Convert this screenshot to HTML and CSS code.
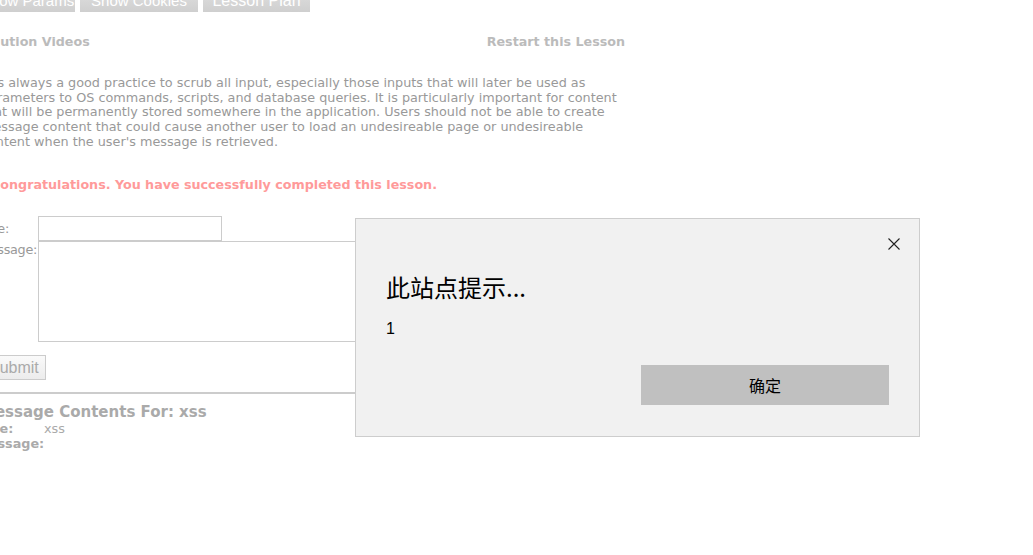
FILE: index.html
```html
<!DOCTYPE html>
<html>
<head>
<meta charset="utf-8">
<link rel="stylesheet" href="styles.css">
</head>
<body>
<div class="page">
  <div class="btnrow">
    <span class="tbtn b1">Show Params</span>
    <span class="tbtn b2">Show Cookies</span>
    <span class="tbtn b3">Lesson Plan</span>
  </div>
  <div class="links">
    <span class="lnk">Solution Videos</span>
    <span class="lnk">Restart this Lesson</span>
  </div>
  <p class="desc">It is always a good practice to scrub all input, especially those inputs that will later be used as<br>parameters to OS commands, scripts, and database queries. It is particularly important for content<br>that will be permanently stored somewhere in the application. Users should not be able to create<br>message content that could cause another user to load an undesireable page or undesireable<br>content when the user's message is retrieved.</p>
  <p class="congrats">Congratulations. You have successfully completed this lesson.</p>
  <div class="form">
    <div class="lbl lbl-title">Title:</div>
    <div class="field"><span class="input"></span></div>
    <div class="lbl lbl-msg">Message:</div>
    <div class="field"><span class="textarea"></span></div>
  </div>
  <span class="submit">Submit</span>
  <div class="rule"></div>
  <div class="contents">
    <div class="ch">Message Contents For: xss</div>
    <div class="row"><b class="k">Title:</b><span class="v">xss</span></div>
    <div class="row"><b class="k">Message:</b></div>
  </div>
</div>

<div class="dialog">
  <div class="close">
    <svg width="12" height="12" viewBox="0 0 12 12"><path d="M0.5 0.5L11.5 11.5M11.5 0.5L0.5 11.5" stroke="#222" stroke-width="1.1" fill="none"/></svg>
  </div>
  <div class="dtitle">此站点提示...</div>
  <div class="dmsg">1</div>
  <div class="dfoot"><span class="ok">确定</span></div>
</div>
</body>
</html>
```
FILE: styles.css
```css
html, body {
  margin: 0;
  padding: 0;
  background: #fff;
  overflow: hidden;
}
body {
  width: 1033px;
  height: 555px;
  position: relative;
  font-family: "DejaVu Sans", Verdana, sans-serif;
}
.page {
  margin-left: -20px;
  width: 660px;
}
.btnrow {
  display: flex;
  gap: 5px;
  margin-top: -9px;
  height: 21px;
}
.tbtn {
  display: block;
  height: 21px;
  line-height: 19px;
  background: linear-gradient(#dedede, #cfcfcf);
  color: #fff;
  font-family: "Liberation Sans", Arial, sans-serif;
  font-size: 15px;
  text-align: center;
  white-space: nowrap;
  box-sizing: border-box;
}
.b1 { width: 95px; }
.b2 { width: 118px; }
.b3 { width: 107px; font-size: 16px; }
.links {
  display: flex;
  justify-content: space-between;
  width: 647px;
  margin-top: 22px;
  margin-left: -2px;
  font-weight: bold;
  font-size: 12.7px;
  color: #bbb;
}
.desc {
  margin: 27px 0 0 1px;
  font-size: 12.8px;
  line-height: 14.7px;
  color: #999;
}
.congrats {
  margin: 27px 0 0 11px;
  font-size: 12.7px;
  font-weight: bold;
  color: #ff9a9a;
}
.form {
  display: grid;
  grid-template-columns: 58px auto;
  margin-top: 24px;
}
.lbl {
  margin-left: -1px;
  font-size: 12.8px;
  letter-spacing: -0.3px;
  color: #999;
  text-align: left;
  white-space: nowrap;
}
.lbl-title { align-self: center; }
.lbl-msg { padding-top: 1px; }
.input {
  display: block;
  width: 184px;
  height: 25px;
  box-sizing: border-box;
  border: 1px solid #ccc;
}
.textarea {
  display: block;
  width: 420px;
  height: 101px;
  box-sizing: border-box;
  border: 1px solid #ccc;
}
.submit {
  display: inline-block;
  margin-top: 13px;
  margin-left: 2px;
  height: 25px;
  line-height: 23px;
  padding: 0 6px;
  box-sizing: border-box;
  border: 1px solid #ccc;
  background: linear-gradient(#fafafa, #ececec);
  color: #aaa;
  font-family: "Liberation Sans", Arial, sans-serif;
  font-size: 16px;
}
.rule {
  margin-top: 12px;
  width: 600px;
  border-top: 2px solid #ccc;
}
.contents {
  margin-top: 9px;
  color: #aaa;
}
.ch {
  font-size: 15px;
  font-weight: bold;
  line-height: 18px;
}
.row {
  margin-left: -4px;
  font-size: 12.8px;
  line-height: 15px;
}
.k { display: inline-block; width: 68px; }
.v { color: #aaa; font-weight: normal; }

.dialog {
  position: absolute;
  left: 355px;
  top: 218px;
  width: 565px;
  height: 219px;
  box-sizing: border-box;
  background: #f1f1f1;
  border: 1px solid #cdcdcd;
  padding: 0 30px;
  font-family: "Noto Sans CJK SC", "Liberation Sans", sans-serif;
  color: #000;
}
.close {
  position: absolute;
  right: 19px;
  top: 19px;
  width: 12px;
  height: 12px;
}
.close svg { display: block; }
.dtitle {
  margin-top: 50px;
  font-size: 24px;
  line-height: 36px;
}
.dmsg {
  margin-top: 14px;
  font-family: "Liberation Sans", sans-serif;
  font-size: 16px;
  line-height: 20px;
}
.dfoot {
  display: flex;
  justify-content: flex-end;
  margin-top: 26px;
}
.ok {
  display: block;
  width: 248px;
  height: 40px;
  line-height: 40px;
  text-align: center;
  background: #c0c0c0;
  font-size: 16px;
}
```
